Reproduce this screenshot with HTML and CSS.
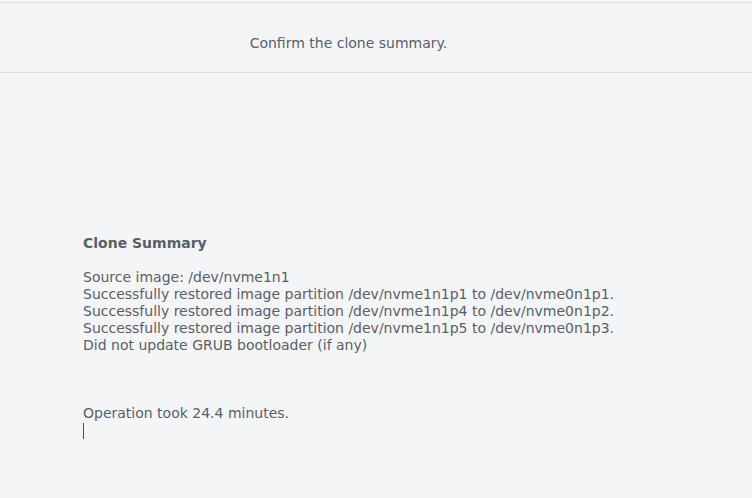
FILE: index.html
```html
<!DOCTYPE html>
<html>
<head>
<meta charset="utf-8">
<link rel="stylesheet" href="styles.css">
</head>
<body>
<div class="page">
  <header class="header">
    <p class="prompt">Confirm the clone summary.</p>
  </header>
  <main class="content">
    <div class="summary">
      <div class="line title">Clone Summary</div>
      <div class="line">&nbsp;</div>
      <div class="line">Source image: /dev/nvme1n1</div>
      <div class="line">Successfully restored image partition /dev/nvme1n1p1 to /dev/nvme0n1p1.</div>
      <div class="line">Successfully restored image partition /dev/nvme1n1p4 to /dev/nvme0n1p2.</div>
      <div class="line">Successfully restored image partition /dev/nvme1n1p5 to /dev/nvme0n1p3.</div>
      <div class="line">Did not update GRUB bootloader (if any)</div>
      <div class="line">&nbsp;</div>
      <div class="line">&nbsp;</div>
      <div class="line">&nbsp;</div>
      <div class="line">Operation took 24.4 minutes.</div>
      <div class="line"><span class="cursor"></span></div>
    </div>
  </main>
</div>
</body>
</html>
```
FILE: styles.css
```css
html, body {
  margin: 0;
  padding: 0;
  background: #f4f5f7;
}
.page {
  width: 752px;
  height: 498px;
  display: flex;
  flex-direction: column;
  font-family: "DejaVu Sans", sans-serif;
  color: #5a5e66;
  overflow: hidden;
}
.header {
  margin-top: 2px;
  height: 69px;
  border-top: 1px solid #dcdee1;
  border-bottom: 1px solid #dcdee1;
  display: flex;
  align-items: center;
  justify-content: center;
}
.prompt {
  margin: 0;
  padding: 10px 55px 0 0;
  font-family: "DejaVu Sans", sans-serif;
  font-size: 14px;
  color: #5a5e66;
}
.content {
  padding: 162px 0 0 83px;
}
.summary {
  font-size: 14px;
  line-height: 17px;
}
.title {
  font-weight: bold;
}
.cursor {
  display: inline-block;
  width: 1px;
  height: 16px;
  background: #4a4d52;
  vertical-align: middle;
}
```
